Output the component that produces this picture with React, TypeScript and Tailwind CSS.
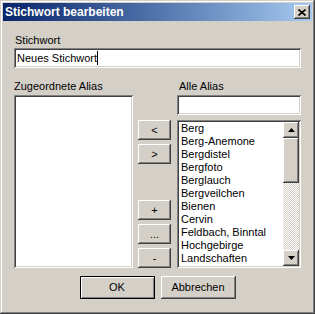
import React from 'react';

// classic win2k bevels
const raised =
  'shadow-[inset_-1px_-1px_0_#404040,inset_1px_1px_0_#ffffff,inset_-2px_-2px_0_#808080,inset_2px_2px_0_#d4d0c8]';
const sunken =
  'shadow-[inset_1px_1px_0_#808080,inset_-1px_-1px_0_#ffffff,inset_2px_2px_0_#404040,inset_-2px_-2px_0_#d4d0c8]';

const ALIASES = [
  'Berg',
  'Berg-Anemone',
  'Bergdistel',
  'Bergfoto',
  'Berglauch',
  'Bergveilchen',
  'Bienen',
  'Cervin',
  'Feldbach, Binntal',
  'Hochgebirge',
  'Landschaften',
  'Lötschental',
];

const SmallButton: React.FC<{ label: string }> = ({ label }) => (
  <div className={`${raised} bg-[#d4d0c8] w-[33px] h-[20px] flex items-center justify-center leading-none`}>
    {label}
  </div>
);

const App: React.FC = () => {
  return (
    <div className="w-[315px] h-[314px] overflow-hidden bg-[#d4d0c8] font-['Liberation_Sans',Arial,sans-serif] text-[11px] text-black">
      <div className="w-full h-full p-[3px] flex flex-col shadow-[inset_-1px_-1px_0_#404040,inset_1px_1px_0_#d4d0c8,inset_-2px_-2px_0_#808080,inset_2px_2px_0_#ffffff]">
        {/* title bar */}
        <div className="h-[18px] flex items-center justify-between pl-[2px] pr-[2px] bg-gradient-to-r from-[#0a246a] to-[#a6caf0]">
          <span className="text-white font-bold text-[12px] leading-none">Stichwort bearbeiten</span>
          <div className={`${raised} bg-[#d4d0c8] w-[16px] h-[14px] flex items-center justify-center`}>
            <svg width="8" height="7" viewBox="0 0 8 7">
              <path d="M0.5 0.5 L7.5 6.5 M7.5 0.5 L0.5 6.5" stroke="#000" strokeWidth="1.6" />
            </svg>
          </div>
        </div>

        <div className="flex flex-col px-[11px]">
          <div className="mt-[13px] h-[13px] leading-[13px] pl-px">Stichwort</div>
          <div className={`${sunken} bg-white h-[20px] mt-px flex items-center pl-[3px]`}>
            <span className="leading-[13px]">Neues Stichwort</span>
            <span className="inline-block w-px h-[14px] bg-black" />
          </div>

          <div className="flex mt-[12px]">
            <div className="w-[119px] flex flex-col">
              <div className="h-[13px] leading-[13px]">Zugeordnete Alias</div>
              <div className={`${sunken} bg-white h-[173px] mt-[2px]`} />
            </div>

            <div className="ml-[5px] h-[188px] pt-[40px] flex flex-col">
              <div className="flex flex-col gap-[4px]">
                <SmallButton label="<" />
                <SmallButton label=">" />
              </div>
              <div className="mt-auto flex flex-col gap-[4px]">
                <SmallButton label="+" />
                <SmallButton label="..." />
                <SmallButton label="-" />
              </div>
            </div>

            <div className="ml-[6px] w-[124px] flex flex-col">
              <div className="h-[13px] leading-[13px] pl-[2px]">Alle Alias</div>
              <div className={`${sunken} bg-white h-[20px] mt-[2px]`} />
              <div className={`${sunken} bg-white h-[148px] mt-[5px] p-[2px] flex`}>
                <div className="flex-1 overflow-hidden pl-[2px]">
                  {ALIASES.map((a) => (
                    <div key={a} className="h-[13px] leading-[13px] whitespace-nowrap">
                      {a}
                    </div>
                  ))}
                </div>
                <div className="w-[16px] flex flex-col">
                  <div className={`${raised} bg-[#d4d0c8] h-[16px] flex items-center justify-center`}>
                    <svg width="7" height="4" viewBox="0 0 7 4">
                      <path d="M3.5 0 L7 4 L0 4 Z" fill="#000" />
                    </svg>
                  </div>
                  <div className={`${raised} bg-[#d4d0c8] h-[45px]`} />
                  <div className="flex-1 bg-[image:repeating-conic-gradient(#d4d0c8_0_25%,#ffffff_0_50%)] bg-[length:2px_2px]" />
                  <div className={`${raised} bg-[#d4d0c8] h-[16px] flex items-center justify-center`}>
                    <svg width="7" height="4" viewBox="0 0 7 4">
                      <path d="M0 0 L7 0 L3.5 4 Z" fill="#000" />
                    </svg>
                  </div>
                </div>
              </div>
            </div>
          </div>

          <div className="flex justify-center gap-[6px] mt-[8px]">
            <div className="w-[75px] h-[23px] border border-black">
              <div className="w-full h-full bg-[#d4d0c8] flex items-center justify-center shadow-[inset_1px_1px_0_#ffffff,inset_-1px_-1px_0_#808080]">
                OK
              </div>
            </div>
            <div className={`${raised} bg-[#d4d0c8] w-[75px] h-[23px] flex items-center justify-center`}>
              Abbrechen
            </div>
          </div>
        </div>
      </div>
    </div>
  );
};

export default App;
